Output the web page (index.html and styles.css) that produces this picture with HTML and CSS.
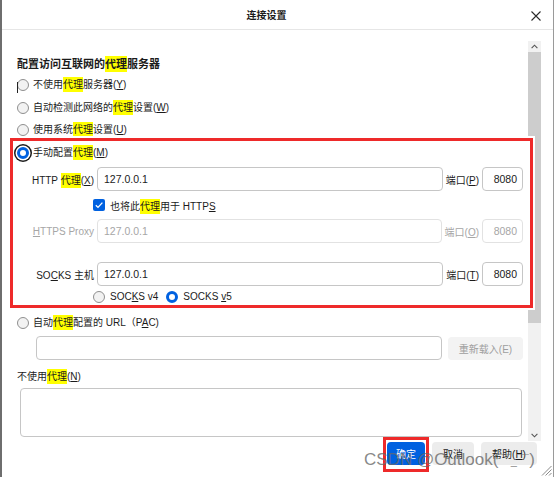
FILE: index.html
```html
<!DOCTYPE html>
<html lang="zh-CN">
<head>
<meta charset="utf-8">
<title>连接设置</title>
<link rel="stylesheet" href="styles.css">
</head>
<body>
<div class="window">
  <header class="titlebar">
    <div class="title">连接设置</div>
    <svg class="close" width="10" height="10" viewBox="0 0 10 10"><path d="M0.5 0.5 L9.5 9.5 M9.5 0.5 L0.5 9.5" stroke="#2a2a2a" stroke-width="1.1" fill="none"/></svg>
  </header>

  <div class="body">
    <div class="content">
      <h1 class="heading">配置访问互联网的<mark>代理</mark>服务器</h1>
      <div class="radio-list">
        <div class="radio-row"><span class="radio"></span><span class="txt">不使用<mark>代理</mark>服务器(<u>Y</u>)</span></div>
        <div class="radio-row"><span class="radio"></span><span class="txt">自动检测此网络的<mark>代理</mark>设置(<u>W</u>)</span></div>
        <div class="radio-row"><span class="radio"></span><span class="txt">使用系统<mark>代理</mark>设置(<u>U</u>)</span></div>
      </div>

      <section class="manual">
        <div class="radio-row first"><span class="radio checked focus"></span><span class="txt">手动配置<mark>代理</mark>(<u>M</u>)</span></div>
        <div class="proxy-row">
          <span class="lbl">HTTP <mark>代理</mark>(<u>X</u>)</span>
          <div class="field">127.0.0.1</div>
          <span class="port-lbl">端口(<u>P</u>)</span>
          <div class="field port">8080</div>
        </div>
        <div class="check-row">
          <span class="checkbox"><svg width="10" height="10" viewBox="0 0 10 10"><path d="M1.8 5.2 L4 7.4 L8.4 2.6" stroke="#fff" stroke-width="1.3" fill="none"/></svg></span><span class="txt">也将此<mark>代理</mark>用于 HTTP<u>S</u></span>
        </div>
        <div class="proxy-row disabled">
          <span class="lbl"><u>H</u>TTPS Proxy</span>
          <div class="field">127.0.0.1</div>
          <span class="port-lbl">端口(<u>O</u>)</span>
          <div class="field port">8080</div>
        </div>
        <div class="proxy-row socks">
          <span class="lbl">SO<u>C</u>KS 主机</span>
          <div class="field">127.0.0.1</div>
          <span class="port-lbl">端口(<u>T</u>)</span>
          <div class="field port">8080</div>
        </div>
        <div class="socks-versions">
          <div class="radio-row"><span class="radio"></span><span class="txt">SOC<u>K</u>S v4</span></div>
          <div class="radio-row v5"><span class="radio checked"></span><span class="txt">SOCKS <u>v</u>5</span></div>
        </div>
      </section>

      <div class="radio-row pac"><span class="radio"></span><span class="txt">自动<mark>代理</mark>配置的 URL（P<u>A</u>C)</span></div>
      <div class="pac-row">
        <div class="field pac-field"></div>
        <button class="reload">重新载入(E)</button>
      </div>
      <div class="noproxy-label">不使用<mark>代理</mark>(<u>N</u>)</div>
      <div class="textarea"></div>
    </div>
  </div>

  <footer class="footer">
    <div class="annot"><button class="btn primary">确定</button></div>
    <button class="btn cancel">取消</button>
    <button class="btn help">帮助(<u>H</u>)</button>
  </footer>

  <div class="scrollbar">
    <div class="sb-up"><svg width="7" height="5" viewBox="0 0 7 5"><path d="M0.6 4.2 L3.5 1.2 L6.4 4.2" stroke="#555" stroke-width="1.1" fill="none"/></svg></div>
    <div class="sb-thumb"></div>
    <div class="sb-track"><svg width="7" height="5" viewBox="0 0 7 5"><path d="M0.6 0.8 L3.5 3.8 L6.4 0.8" stroke="#555" stroke-width="1.1" fill="none"/></svg></div>
  </div>

  <div class="ibeam"></div>
  <div class="watermark">CSDN @Outlook(<span class="face">￣_￣</span>)</div>
  <svg class="grip" width="11" height="11" viewBox="0 0 11 11"><path d="M10.5 1 L1 10.5 M10.5 4.5 L4.5 10.5 M10.5 8 L8 10.5" stroke="#8a8a8a" stroke-width="1" fill="none"/></svg>
</div>
</body>
</html>
```
FILE: styles.css
```css
* { box-sizing: border-box; margin: 0; padding: 0; }
html, body { width: 554px; height: 477px; overflow: hidden; background: #fff; }
body {
  font-family: "Liberation Sans", "Noto Sans CJK SC", sans-serif;
  font-size: 10px;
  color: #1b1b1b;
}
mark { background: #ffff00; color: inherit; padding: 2px 0; }
u { text-decoration: underline; text-underline-offset: 1px; }

.window {
  position: relative;
  width: 554px;
  height: 477px;
  display: flex;
  flex-direction: column;
  border-left: 2px solid #6e6e6e;
  border-right: 1px solid #9a9a9a;
  background: #fff;
}

.titlebar {
  height: 30px;
  flex: none;
  display: flex;
  align-items: center;
  padding-top: 2px;
  border-bottom: 1px solid #e6e6e6;
}
.title { flex: 1; text-align: center; font-weight: bold; font-size: 10px; line-height: 14px; }
.close { flex: none; display: block; margin-right: 12px; }

.body { flex: none; }
.content { display: flex; flex-direction: column; padding: 24px 30px 0 15px; }
.heading { font-size: 11px; font-weight: bold; line-height: 20px; height: 20px; }

.radio-row { display: flex; align-items: center; height: 22.5px; line-height: 14px; white-space: nowrap; }
.radio-list .radio-row:last-child { height: 19px; padding-top: 3px; }
.txt { white-space: pre; }
.radio {
  flex: none;
  width: 12px; height: 12px;
  border-radius: 50%;
  border: 1px solid #8f8f8f;
  background: #f2f2f2;
  margin-right: 4px;
}
.radio.checked { border: 3.5px solid #0061e0; background: #fff; }
.radio.focus { box-shadow: 0 0 0 1.5px #fff, 0 0 0 3px #1c1c1c; }

.manual {
  position: relative;
  z-index: 2;
  height: 170px;
  margin: 0 -10px 0 -7px;
  border: 3px solid #ee2a2a;
  box-shadow: 0 0 0 2px #fff;
  background: #fff;
  padding: 1px 7px 0 4px;
}
.manual .radio-row.first { height: 22px; }

.proxy-row {
  display: grid;
  grid-template-columns: 77px 1fr auto 41px;
  column-gap: 3px;
  align-items: center;
  height: 24px;
  margin-top: 3px;
}
.proxy-row.socks { margin-top: 19px; }
.lbl, .port-lbl { white-space: nowrap; }
.lbl { text-align: right; }

.field {
  height: 24px;
  border: 1px solid #c6c6c6;
  border-radius: 4px;
  padding: 0 6px;
  display: flex;
  align-items: center;
  background: #fff;
  font-size: 10.5px;
}
.field.port { justify-content: flex-end; padding-right: 5px; }
.disabled { color: #a6a6a6; }
.disabled .field { border-color: #e2e2e2; }

.check-row {
  display: flex;
  align-items: center;
  height: 22px;
  margin-top: 3px;
  padding-left: 76px;
  white-space: nowrap;
}
.checkbox {
  flex: none;
  width: 12px; height: 12px;
  border-radius: 2px;
  background: #0061e0;
  margin-right: 5px;
  display: flex;
  align-items: center;
  justify-content: center;
}
.checkbox svg { display: block; }

.socks-versions { display: flex; align-items: center; height: 16px; margin-top: 3px; padding-left: 76px; }
.socks-versions .radio-row { height: 16px; }
.socks-versions .radio { margin-right: 5px; }
.socks-versions .v5 { margin-left: 8px; }

.radio-row.pac { height: 22px; margin-top: 4px; }
.pac-row { display: flex; align-items: center; gap: 6px; height: 24px; margin-top: 2px; padding-left: 19px; }
.pac-field { flex: 1; }
.reload {
  flex: none;
  width: 75px; height: 23px;
  border: none;
  border-radius: 4px;
  background: #f3f3f3;
  color: #9e9e9e;
  font: inherit;
}
.noproxy-label { height: 20px; line-height: 20px; margin-top: 7px; }
.textarea { height: 49px; margin: 1px 1px 0 3px; border: 1px solid #c6c6c6; border-radius: 4px; }

.footer {
  flex: 1;
  display: flex;
  justify-content: flex-end;
  align-items: flex-start;
  gap: 3px;
  padding-right: 16px;
}
.btn {
  height: 23px;
  margin-top: 5px;
  border: none;
  border-radius: 4px;
  background: #ececec;
  color: #1b1b1b;
  font: inherit;
}
.annot { border: 3px solid #ee2a2a; padding: 2px 1px 4px; }
.annot .btn { margin-top: 0; display: block; }
.primary { width: 38px; background: #0061e0; color: #fff; }
.cancel { width: 42px; }
.help { width: 56px; margin-left: 4px; }

.scrollbar {
  position: absolute;
  z-index: 1;
  top: 41px;
  right: 12px;
  width: 13px;
  height: 400px;
  background: #f1f1f1;
  display: flex;
  flex-direction: column;
}
.sb-up { height: 11px; display: flex; align-items: center; justify-content: center; }
.sb-up svg, .sb-track svg { display: block; }
.sb-thumb { height: 271px; background: #cdcdcd; }
.sb-track { flex: 1; display: flex; align-items: flex-end; justify-content: center; padding-bottom: 3px; }

.ibeam { position: absolute; left: 15px; top: 82px; width: 1px; height: 11px; background: #222; }

.watermark {
  position: absolute;
  z-index: 5;
  left: 362px;
  top: 450px;
  font-size: 17px;
  line-height: 20px;
  color: rgba(105, 105, 105, 0.8);
  white-space: nowrap;
  pointer-events: none;
}
.watermark .face { font-family: "Noto Sans CJK SC", "DejaVu Sans", sans-serif; font-size: 12px; }

.grip { position: absolute; right: 1px; bottom: 1px; display: block; }
```
